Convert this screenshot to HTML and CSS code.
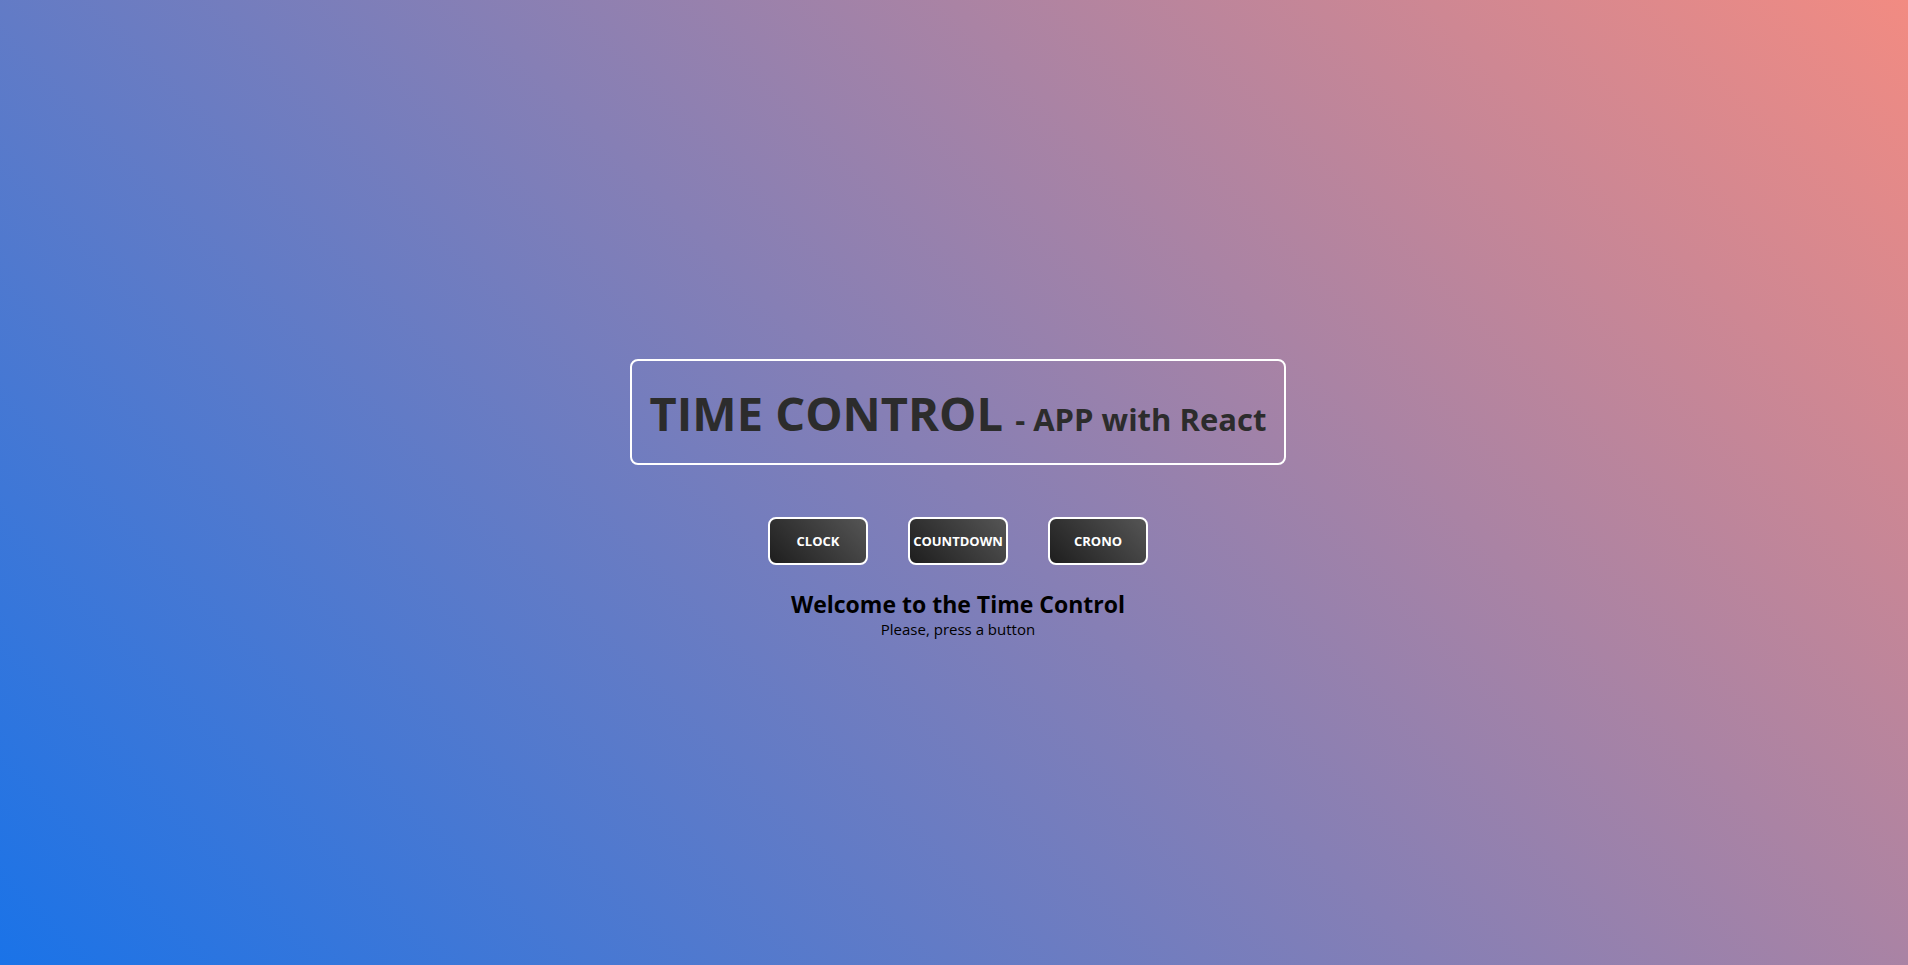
FILE: index.html
```html
<!DOCTYPE html>
<html lang="en">
<head>
<meta charset="utf-8">
<title>Time Control</title>
<link rel="stylesheet" href="styles.css">
</head>
<body>
<div class="app">
  <header class="title-box">
    <h1 class="title">TIME CONTROL <span class="subtitle">- APP with React</span></h1>
  </header>
  <nav class="buttons">
    <button class="btn">CLOCK</button>
    <button class="btn">COUNTDOWN</button>
    <button class="btn">CRONO</button>
  </nav>
  <section class="welcome">
    <h2 class="welcome-title">Welcome to the Time Control</h2>
    <p class="welcome-text">Please, press a button</p>
  </section>
</div>
</body>
</html>
```
FILE: styles.css
```css
html, body {
  margin: 0;
  padding: 0;
  height: 100%;
}
body {
  background: linear-gradient(45deg, #1a73e8, #f28b82);
  font-family: "Open Sans", "Noto Sans", sans-serif;
  overflow: hidden;
}
.app {
  box-sizing: border-box;
  height: 100%;
  padding: 359px 0 0 8px;
  display: flex;
  flex-direction: column;
  align-items: center;
}
.title-box {
  box-sizing: border-box;
  height: 106px;
  border: 2px solid #ffffff;
  border-radius: 8px;
  padding: 20px 18px 0;
}
.title {
  margin: 0;
  font-size: 47px;
  line-height: 64px;
  font-weight: 700;
  color: #2c2c2c;
  white-space: nowrap;
}
.subtitle {
  font-size: 31px;
  line-height: 1;
}
.buttons {
  display: flex;
  gap: 40px;
  margin-top: 52px;
}
.btn {
  box-sizing: border-box;
  width: 100px;
  height: 48px;
  padding: 0;
  border: 2px solid #ffffff;
  border-radius: 8px;
  background: linear-gradient(45deg, #1e1e1e, #555555);
  color: #ffffff;
  font-family: "Open Sans", "Noto Sans", sans-serif;
  font-weight: 700;
  font-size: 13px;
  cursor: pointer;
}
.welcome {
  margin-top: 24px;
  text-align: center;
  color: #000000;
}
.welcome-title {
  margin: 0;
  font-size: 23px;
  line-height: 30px;
  font-weight: 700;
}
.welcome-text {
  margin: 0;
  font-size: 15px;
  line-height: 21px;
}
```
